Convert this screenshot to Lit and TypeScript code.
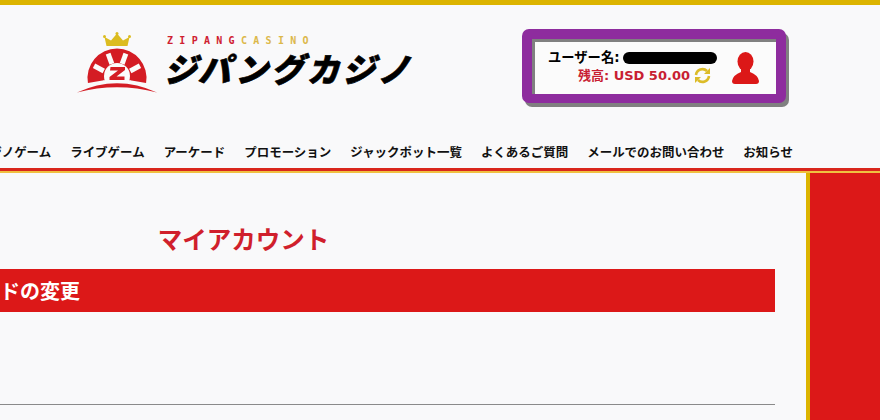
import { LitElement, html, css } from "lit";
import { customElement } from "lit/decorators.js";

const NAV = ["カジノゲーム", "ライブゲーム", "アーケード", "プロモーション", "ジャックポット一覧", "よくあるご質問", "メールでのお問い合わせ", "お知らせ"];

@customElement("app-root")
export class AppRoot extends LitElement {
  static styles = css`
    :host {
      display: block;
      width: 880px;
      height: 420px;
      overflow: hidden;
      background: #f9f9fa;
      font-family: "DejaVu Sans", "Noto Sans CJK JP", sans-serif;
      color: #000;
    }
    .top { height: 5px; background: #dcb400; }
    .header { height: 125px; display: flex; align-items: flex-start; box-sizing: border-box; padding: 24px 0 0 77px; }
    .logo { display: flex; width: 445px; flex: none; gap: 10px; }
    .emblem { width: 80px; height: 62px; margin-top: 3px; flex: none; display: block; }
    .wordmark { display: flex; flex-direction: column; }
    .sub { font: 700 10px/10px "DejaVu Sans Mono", monospace; letter-spacing: 6.3px; color: #cf2030; margin-top: 7px; height: 10px; white-space: nowrap; }
    .sub b { color: #dcb84a; font-weight: 700; }
    .kana {
      font: 900 33px/36px "Noto Sans CJK JP", sans-serif;
      letter-spacing: 2.7px;
      -webkit-text-stroke: 0.7px #000;
      transform: skewX(-14deg);
      transform-origin: 0 100%;
      margin: 4px 0 0 -4px;
      white-space: nowrap;
    }
    .account {
      flex: none;
      width: 264px;
      height: 74px;
      box-sizing: border-box;
      background: #8e2c9e;
      border-radius: 7px;
      box-shadow: 3px 4px 0 #808080;
      padding: 10px 10px 9px;
    }
    .panel {
      height: 100%;
      background: #fbfbfb;
      box-shadow: inset 3px 3px 0 #808080;
      display: flex;
      box-sizing: border-box;
      padding: 10px 17px 0 16px;
      justify-content: space-between;
    }
    .info { display: flex; flex-direction: column; align-items: flex-end; width: 169px; }
    .row1 { display: flex; align-items: center; gap: 3px; font-weight: 700; font-size: 13.3px; line-height: 17px; white-space: nowrap; width: 169px; }
    .mask { width: 94px; height: 12px; background: #000; border-radius: 6px; }
    .row2 { display: flex; align-items: center; gap: 4px; font-weight: 700; font-size: 13px; line-height: 17px; color: #c81e32; white-space: nowrap; margin-top: 1px; margin-right: 6px; }
    .row2 svg, .person { display: block; flex: none; }
    .person { margin-top: 3px; }
    .nav { height: 38px; display: flex; justify-content: flex-end; gap: 19px; padding-right: 87px; box-sizing: border-box; align-items: flex-start; padding-top: 13px; }
    .nav a { font: 700 12.48px/18px "Noto Sans CJK JP", sans-serif; color: #111; white-space: nowrap; flex: none; }
    .rule { height: 3px; background: #d9261c; }
    .rule2 { height: 2px; background: #f0c040; }
    .body { display: flex; height: 247px; }
    .main { flex: none; width: 806px; overflow: hidden; }
    .track { margin-left: -288px; width: 1063px; }
    .title { margin: 49px 0 0; text-align: center; font: 700 24.5px/34px "Noto Sans CJK JP", sans-serif; color: #d01f2c; }
    .bar { margin: 13px 0 0; height: 43px; background: #dc1818; color: #fff; font: 700 20px/43px "Noto Sans CJK JP", sans-serif; padding-left: 208px; white-space: nowrap; }
    .line { margin-top: 92px; height: 1px; background: #8a8a8a; }
    .side { flex: 1; border-left: 4px solid #dcb400; background: #dc1818; }
  `;

  render() {
    return html`
      <div class="top"></div>
      <div class="header">
        <div class="logo">
          <svg class="emblem" viewBox="0 0 80 62">
            <path d="M29.500 14 L27.500 5 L34 8.500 L40 1.500 L46 8.500 L52.500 5 L50.500 14 Z" fill="#dcbc20" />
            <circle cx="27.500" cy="4.500" r="1.500" fill="#dcbc20" />
            <circle cx="40" cy="1.500" r="1.500" fill="#dcbc20" />
            <circle cx="52.500" cy="4.500" r="1.500" fill="#dcbc20" />
            <path d="M10.930 51 A29.500 29.500 0 1 1 69.070 51 Q40 44 10.930 51 Z" fill="#d41c24" />
            <circle cx="40" cy="44" r="13" fill="#fbfbfb" />
            <path d="M26 48.500 H54 V56 H26 Z" fill="#f9f9fa" />
            <g fill="#fbfbfb">
              <rect x="37.500" y="20" width="5" height="11" transform="rotate(-20 40 46)" />
              <rect x="37.500" y="20" width="5" height="11" transform="rotate(20 40 46)" />
              <rect x="37.500" y="20" width="5" height="11" transform="rotate(-62 40 46)" />
              <rect x="37.500" y="20" width="5" height="11" transform="rotate(62 40 46)" />
            </g>
            <path d="M33.500 35 H48 V38 L39.500 44.500 H47.500 V48 H32.500 V45 L41 38.500 H33 Z" fill="#d41c24" />
            <path d="M0 60.500 Q40 42 80 60.500 Q40 50 0 60.500 Z" fill="#d41c24" />
          </svg>
          <div class="wordmark">
            <div class="sub">ZIPANG<b>CASINO</b></div>
            <div class="kana">ジパングカジノ</div>
          </div>
        </div>
        <div class="account">
          <div class="panel">
            <div class="info">
              <div class="row1"><span>ユーザー名:</span><span class="mask"></span></div>
              <div class="row2">
                <span>残高: USD 50.00</span>
                <svg width="17" height="17" viewBox="0 0 17 17" fill="none" stroke="#dcbc28" stroke-width="2.600">
                  <path d="M2 8 A6.500 6.500 0 0 1 13 4" />
                  <path d="M15 9 A6.500 6.500 0 0 1 4 13" />
                  <path d="M16 1 V7 H10 Z" fill="#dcbc28" stroke="none" />
                  <path d="M1 16 V10 H7 Z" fill="#dcbc28" stroke="none" />
                </svg>
              </div>
            </div>
            <svg class="person" width="27" height="32" viewBox="0 0 27 32">
              <ellipse cx="13.500" cy="9.500" rx="8" ry="9.500" fill="#dc1818" />
              <path d="M9 17 L9 20 Q1 23 0 29 Q0 32 3 32 H24 Q27 32 27 29 Q26 23 18 20 L18 17 Z" fill="#dc1818" />
            </svg>
          </div>
        </div>
      </div>
      <div class="nav">${NAV.map((n) => html`<a>${n}</a>`)}</div>
      <div class="rule"></div>
      <div class="rule2"></div>
      <div class="body">
        <div class="main">
          <div class="track">
            <h1 class="title">マイアカウント</h1>
            <div class="bar">パスワードの変更</div>
            <div class="line"></div>
          </div>
        </div>
        <div class="side"></div>
      </div>
    `;
  }
}
